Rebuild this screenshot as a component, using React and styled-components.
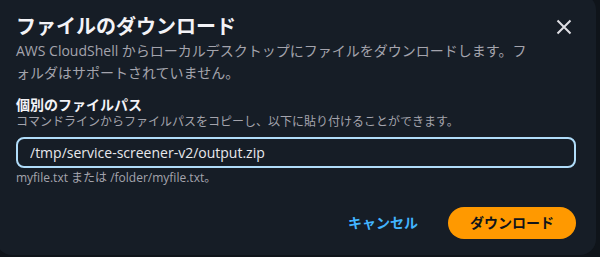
import React from "react"
import styled, { createGlobalStyle } from "styled-components"

const GlobalStyle = createGlobalStyle`
	html, body {
		margin: 0;
		padding: 0;
		background: #0f141a;
	}

	body {
		font-family: "Open Sans", "Noto Sans CJK JP", sans-serif;
		-webkit-font-smoothing: antialiased;
	}
`

const Viewport = styled.div`
	width: 600px;
	height: 257px;
	overflow: hidden;
`

const Dialog = styled.div`
	box-sizing: border-box;
	width: 600px;
	height: 261px;
	margin: -6px 0 0 -4px;
	padding: 19px 20px 16px;
	background: #161d26;
	border-radius: 16px;
	display: flex;
	flex-direction: column;
`

const Header = styled.div`
	display: flex;
	align-items: flex-start;
	gap: 12px;
`

const HeaderText = styled.div`
	flex: 1;
	min-width: 0;
`

const Title = styled.h2`
	margin: 0;
	font-size: 20px;
	line-height: 27px;
	font-weight: 700;
	color: #f3f3f7;
`

const Description = styled.p`
	margin: 0;
	font-size: 14px;
	line-height: 22px;
	color: #a4a4ad;
`

const CloseButton = styled.button`
	flex: none;
	width: 32px;
	height: 28px;
	margin-right: -4px;
	padding: 0;
	border: none;
	background: none;
	color: #dedee3;
	display: flex;
	align-items: center;
	justify-content: center;
	cursor: pointer;
`

const Field = styled.div`
	margin-top: 12px;
	display: flex;
	flex-direction: column;
`

const Label = styled.label`
	font-size: 14px;
	line-height: 18px;
	font-weight: 700;
	color: #f3f3f7;
`

const Hint = styled.span`
	font-size: 12px;
	line-height: 16px;
	color: #a4a4ad;
`

const Input = styled.input`
	box-sizing: border-box;
	width: 100%;
	height: 31px;
	margin-top: 7px;
	padding: 0 12px;
	border: 2px solid #b0dcf9;
	border-radius: 8px;
	background: #161d26;
	color: #e8e8ec;
	font-family: inherit;
	font-size: 14px;
	outline: none;
`

const Constraint = styled.span`
	margin-top: 2px;
	font-size: 12px;
	line-height: 16px;
	color: #a4a4ad;
`

const Footer = styled.div`
	margin-top: auto;
	display: flex;
	justify-content: flex-end;
	align-items: center;
	gap: 8px;
`

const Button = styled.button`
	height: 32px;
	padding: 0 22px;
	border: none;
	border-radius: 20px;
	font-family: inherit;
	font-size: 14px;
	font-weight: 700;
	line-height: 20px;
	cursor: pointer;
	background: ${(p) => (p.$primary ? "#ff9900" : "transparent")};
	color: ${(p) => (p.$primary ? "#0f141a" : "#42b4ff")};
`

const CloseIcon = () => (
	<svg width="16" height="16" viewBox="0 0 16 16" fill="none">
		<path d="M1.5 1.5 L14.5 14.5 M14.5 1.5 L1.5 14.5" stroke="currentColor" strokeWidth="2" />
	</svg>
)

const App = () => (
	<Viewport>
		<GlobalStyle />
		<Dialog>
			<Header>
				<HeaderText>
					<Title>ファイルのダウンロード</Title>
					<Description>
						AWS CloudShell からローカルデスクトップにファイルをダウンロードします。フォルダはサポートされていません。
					</Description>
				</HeaderText>
				<CloseButton aria-label="閉じる">
					<CloseIcon />
				</CloseButton>
			</Header>
			<Field>
				<Label>個別のファイルパス</Label>
				<Hint>コマンドラインからファイルパスをコピーし、以下に貼り付けることができます。</Hint>
				<Input defaultValue="/tmp/service-screener-v2/output.zip" />
				<Constraint>myfile.txt または /folder/myfile.txt。</Constraint>
			</Field>
			<Footer>
				<Button>キャンセル</Button>
				<Button $primary>ダウンロード</Button>
			</Footer>
		</Dialog>
	</Viewport>
)

export default App
